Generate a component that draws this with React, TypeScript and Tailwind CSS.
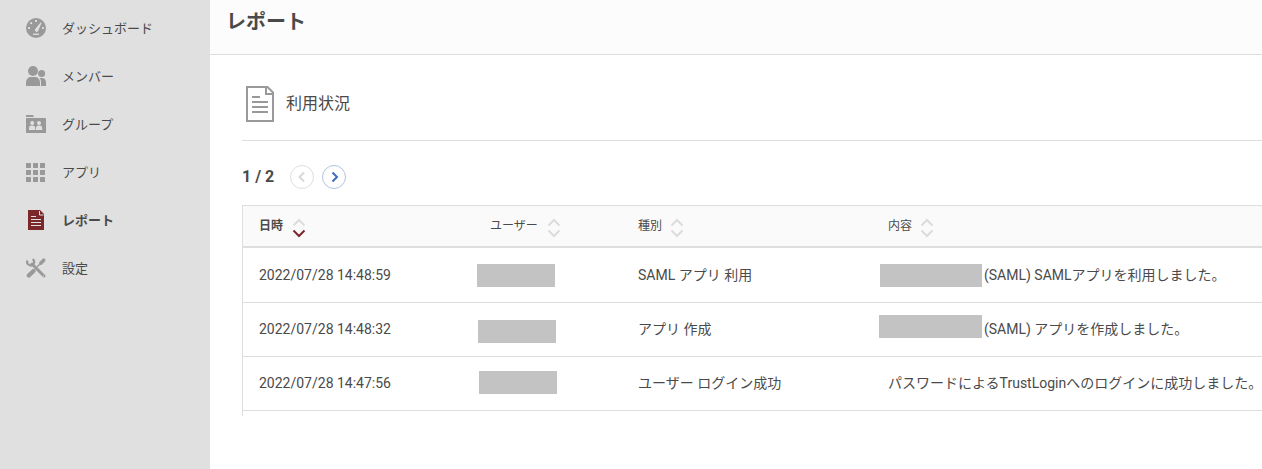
import type { ReactNode } from "react";
import clsx from "clsx";

const DashboardIcon = () => (
  <svg width="20" height="20" viewBox="0 0 20 20">
    <circle cx="10" cy="10" r="10" fill="#999" />
    <g fill="#e0e0e0">
      <rect x="2.1" y="9.1" width="1.9" height="1.9" />
      <rect x="4.2" y="4.2" width="1.9" height="1.9" />
      <rect x="9.1" y="2" width="1.9" height="1.9" />
      <rect x="16" y="9.1" width="1.9" height="1.9" />
      <path d="M14.8 4.2 15.6 4.7 12.1 12.9a1.7 1.7 0 0 1-3-1.7z" />
      <rect x="7" y="15.6" width="6" height="1.3" />
    </g>
  </svg>
);

const MembersIcon = () => (
  <svg width="20" height="20" viewBox="0 0 20 20" fill="#999">
    <circle cx="7" cy="5" r="5" />
    <circle cx="15.6" cy="7.6" r="3.5" />
    <path d="M0 20v-3.5C0 13 2.5 11 5 11h4c2.600 0 5 2 5 5.500V20z" />
    <path d="M15 20v-4c0-1.700-.6-3-1.500-3.900h2.500c2.500 0 4 1.900 4 4.400V20z" />
  </svg>
);

const GroupIcon = () => (
  <svg width="20" height="20" viewBox="0 0 20 20">
    <path d="M0 1h7l1 2H0zM0 4h19a1 1 0 0 1 1 1v14H0z" fill="#999" />
    <g fill="#e0e0e0">
      <circle cx="6.200" cy="9" r="2" />
      <circle cx="13" cy="9" r="2" />
      <path d="M3 16v-2a2.500 2.500 0 0 1 2.500-2.400h1.400A2.500 2.500 0 0 1 9.300 14v2zM10 16v-2a2.500 2.500 0 0 1 2.500-2.400h1.200A2.500 2.500 0 0 1 16.200 14v2z" />
    </g>
  </svg>
);

const AppsIcon = () => (
  <svg width="20" height="20" viewBox="0 0 20 20" fill="#999">
    {[1, 8, 15].map((y) => [0, 7, 14].map((x) => <rect key={`${x}-${y}`} x={x} y={y} width="5" height="5" />))}
  </svg>
);

const ReportIcon = () => (
  <svg width="20" height="20" viewBox="0 0 20 20">
    <path d="M2 0h12l4 4v16H2z" fill="#7b282b" />
    <path d="M13.500 1v4H17.500" fill="none" stroke="#e0e0e0" />
    <path d="M5 6.500h5M5 9.500h10M5 12.500h10M5 15.500h10" stroke="#e0e0e0" />
  </svg>
);

const SettingsIcon = () => (
  <svg width="20" height="20" viewBox="0 0 20 20" fill="none" stroke="#999">
    <path d="M6 6 18 18" strokeWidth="3" strokeLinecap="round" />
    <path d="M1.600 2.400A3.400 3.400 0 1 0 6.600 1.200" strokeWidth="2.200" />
    <path d="M2.800 17.600 7.500 13" strokeWidth="4.200" strokeLinecap="round" />
    <path d="M11.200 8.800 15 5" strokeWidth="1.400" />
    <path d="M13.800 6.700 13 4.600 17 .6 19.200.8 19.400 3 15.500 7z" fill="#999" stroke="none" />
    <circle cx="17.500" cy="17.800" r=".6" fill="#e0e0e0" stroke="none" />
  </svg>
);

const DocumentIcon = () => (
  <svg width="28" height="36" viewBox="0 0 28 36" fill="none" stroke="#999" strokeWidth="2">
    <path d="M1 1h20.500l5.500 5.500V35H1z" />
    <path d="M20 1v7h7" />
    <path d="M6 11h8M6 16h16M6 21h16M6 26h16" />
  </svg>
);

const menu: { label: string; icon: ReactNode; active?: boolean }[] = [
  { label: "ダッシュボード", icon: <DashboardIcon /> },
  { label: "メンバー", icon: <MembersIcon /> },
  { label: "グループ", icon: <GroupIcon /> },
  { label: "アプリ", icon: <AppsIcon /> },
  { label: "レポート", icon: <ReportIcon />, active: true },
  { label: "設定", icon: <SettingsIcon /> },
];

const Sort = ({ desc = false }: { desc?: boolean }) => (
  <svg className="mt-[3px]" width="14" height="20" viewBox="0 0 14 20" fill="none" strokeWidth="2">
    <path d="M1.500 7.500 7 2l5.500 5.500" stroke="#dcdcdc" />
    <path d="M1.500 12.500 7 18l5.500-5.500" stroke={desc ? "#7b282b" : "#dcdcdc"} />
  </svg>
);

const Mask = ({ className }: { className: string }) => (
  <span className={clsx("block h-[23px] shrink-0 self-start bg-[#c3c3c3]", className)} />
);

const grid = "grid grid-cols-[231px_148px_250px_1fr]";

const rows = [
  {
    height: "h-[55px]",
    pad: "",
    time: "2022/07/28 14:48:59",
    userMask: "ml-[3px] mt-4 w-[78px]",
    type: "SAML アプリ 利用",
    contentMask: "ml-2 mt-4 w-[102px]",
    content: "(SAML) SAMLアプリを利用しました。",
  },
  {
    height: "h-[54px]",
    pad: "pb-px",
    time: "2022/07/28 14:48:32",
    userMask: "ml-1 mt-[17px] w-[78px]",
    type: "アプリ 作成",
    contentMask: "ml-[7px] mt-3 w-[103px]",
    content: "(SAML) アプリを作成しました。",
  },
  {
    height: "h-[54px]",
    pad: "pb-px",
    time: "2022/07/28 14:47:56",
    userMask: "ml-[5px] mt-[14px] w-[78px]",
    type: "ユーザー ログイン成功",
    content: "パスワードによるTrustLoginへのログインに成功しました。",
  },
];

export default function App() {
  return (
    <div
      lang="ja"
      className="flex h-[469px] w-[1262px] overflow-hidden bg-white font-['Roboto','Noto_Sans_CJK_JP',sans-serif] text-[#4a4a4a]"
    >
      <nav className="w-[210px] shrink-0 bg-[#e0e0e0] pt-1">
        {menu.map((item) => (
          <a key={item.label} className={clsx("flex h-12 items-center gap-4 pl-[26px] text-[13px]", item.active && "font-bold")}>
            {item.icon}
            <span className="pt-0.5">{item.label}</span>
          </a>
        ))}
      </nav>
      <main className="min-w-0 flex-1">
        <header className="h-[55px] border-b border-[#dedede] bg-[#fcfcfc] pt-[7px] pl-4">
          <h1 className="text-xl leading-[30px] font-bold">レポート</h1>
        </header>
        <section className="pl-8">
          <div className="flex h-[86px] items-center gap-3 border-b border-[#dedede] pt-3 pl-1">
            <DocumentIcon />
            <h2 className="text-base">利用状況</h2>
          </div>
          <div className="flex h-16 items-center pt-2">
            <span className="w-12 text-base font-bold">1 / 2</span>
            <button className="flex size-6 items-center justify-center rounded-full border border-[#dedede]">
              <svg width="12" height="12" viewBox="0 0 12 12" fill="none" stroke="#d8d8d8" strokeWidth="2">
                <path d="M8 1.500 3.500 6 8 10.500" />
              </svg>
            </button>
            <button className="ml-2 flex size-6 items-center justify-center rounded-full border border-[#b0c2e2]">
              <svg width="12" height="12" viewBox="0 0 12 12" fill="none" stroke="#3f6cc0" strokeWidth="2">
                <path d="M4.500 1.500 9 6 4.500 10.500" />
              </svg>
            </button>
          </div>
          <div className="h-[211px] overflow-hidden border-t border-l border-[#dedede]">
            <div className={clsx(grid, "h-[42px] border-b-2 border-[#dedede] bg-[#fafafa] text-xs")}>
              <div className="flex items-center gap-[9px] pl-4 font-bold">
                <span>日時</span>
                <Sort desc />
              </div>
              <div className="flex items-center gap-[9px] pl-4">
                <span>ユーザー</span>
                <Sort />
              </div>
              <div className="flex items-center gap-2 pl-4">
                <span>種別</span>
                <Sort />
              </div>
              <div className="flex items-center gap-2 pl-4">
                <span>内容</span>
                <Sort />
              </div>
            </div>
            {rows.map((row) => (
              <div key={row.time} className={clsx(grid, "items-stretch border-b border-[#dedede] text-sm whitespace-nowrap", row.height)}>
                <div className={clsx("flex items-center pl-4", row.pad)}>{row.time}</div>
                <div className="flex">
                  <Mask className={row.userMask} />
                </div>
                <div className={clsx("flex items-center pl-4", row.pad)}>{row.type}</div>
                <div className={clsx("flex items-center", row.pad)}>
                  {row.contentMask && <Mask className={row.contentMask} />}
                  <span className={row.contentMask ? "pl-0.5" : "pl-4"}>{row.content}</span>
                </div>
              </div>
            ))}
          </div>
        </section>
      </main>
    </div>
  );
}
